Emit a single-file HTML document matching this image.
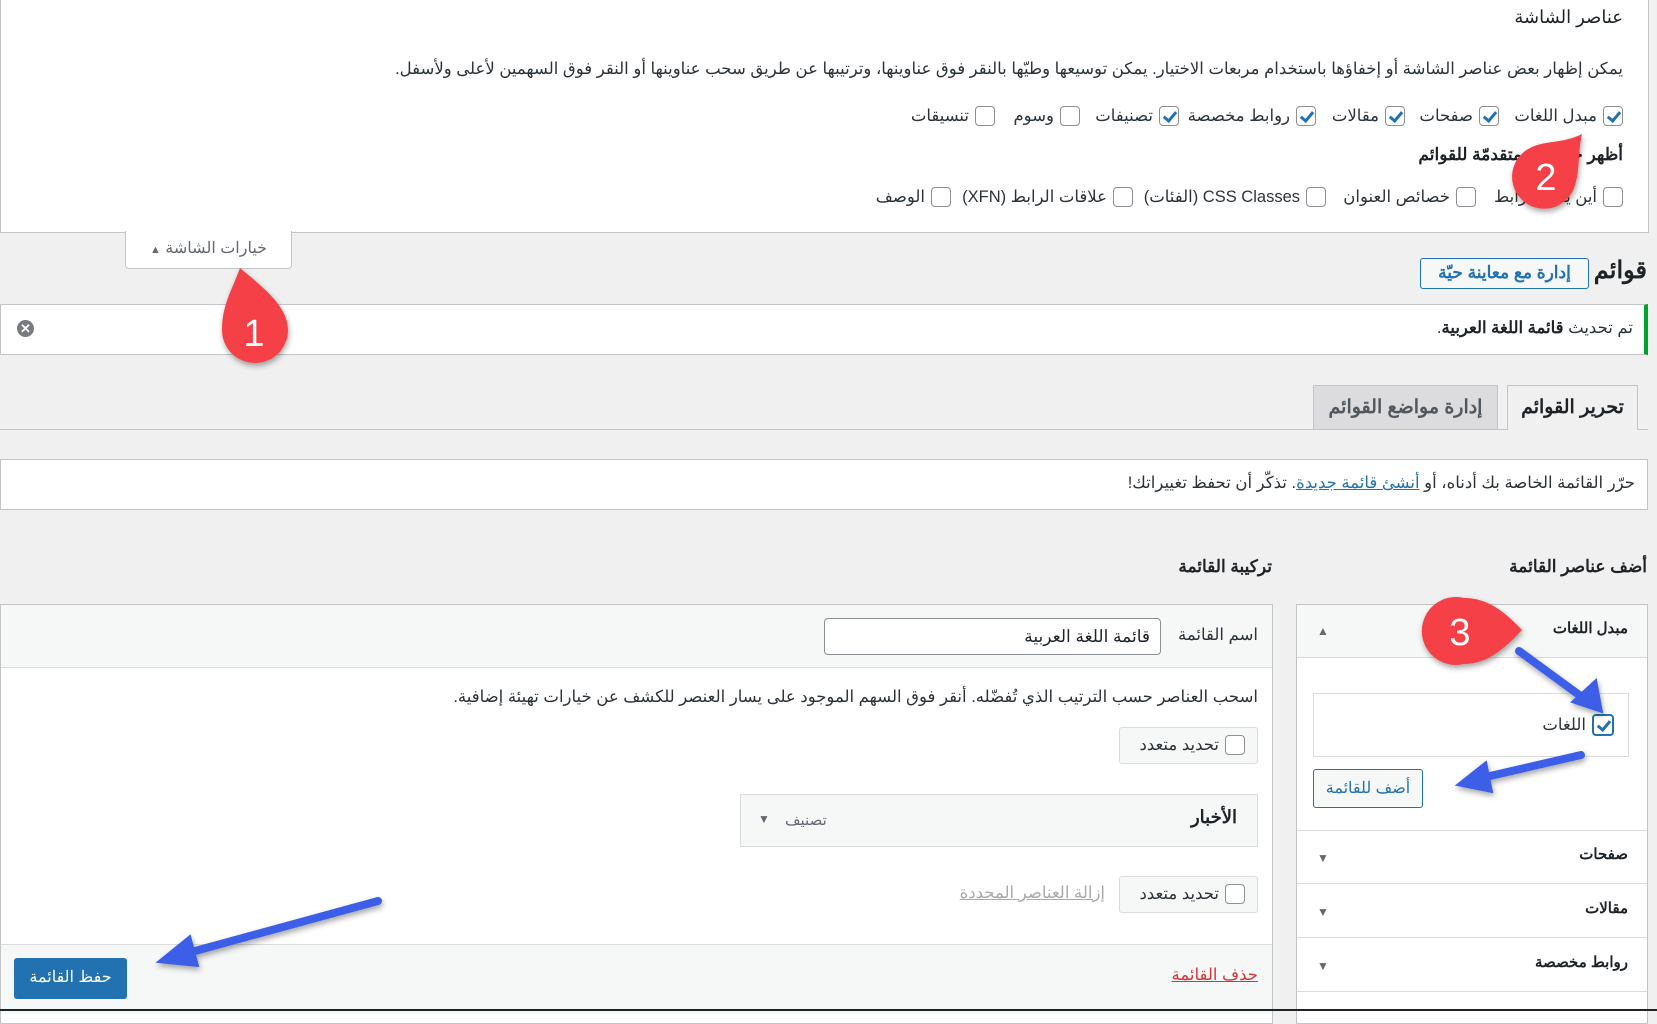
<!DOCTYPE html>
<html dir="rtl"><head><meta charset="utf-8"><style>
*{box-sizing:border-box;margin:0;padding:0}
body{width:1657px;height:1011px;overflow:hidden;background:#f0f0f1;font-family:"Liberation Sans","Noto Sans CJK SC",sans-serif;color:#1d2327;font-size:16.5px;position:relative}
.a{position:absolute;white-space:nowrap}
.cb{display:inline-block;width:20px;height:20px;border:1px solid #8c8f94;border-radius:4px;background:#fff;vertical-align:middle;position:relative}
.cb.on::after{content:"";position:absolute;left:6px;top:2px;width:5px;height:10px;border:solid #2271b1;border-width:0 3px 3px 0;transform:rotate(40deg)}
.it{position:absolute;display:flex;align-items:center;gap:6px;font-size:16.5px;color:#2c3338;white-space:nowrap}
.box{position:absolute;background:#fff;border:1px solid #c3c4c7}
b{font-weight:bold}
</style></head><body>
<div class="box" style="left:0;top:-1px;width:1649px;height:234px;border-top:none"></div>
<div class="a" style="right:34px;top:7px;font-size:18px;color:#1d2327">عناصر الشاشة</div>
<div class="a" style="right:34px;top:59px;font-size:16.5px;color:#2c3338">يمكن إظهار بعض عناصر الشاشة أو إخفاؤها باستخدام مربعات الاختيار. يمكن توسيعها وطيّها بالنقر فوق عناوينها، وترتيبها عن طريق سحب عناوينها أو النقر فوق السهمين لأعلى ولأسفل.</div>
<div class="it" style="right:34px;top:106px"><span class="cb on"></span>مبدل اللغات</div>
<div class="it" style="right:158px;top:106px"><span class="cb on"></span>صفحات</div>
<div class="it" style="right:252px;top:106px"><span class="cb on"></span>مقالات</div>
<div class="it" style="right:341px;top:106px"><span class="cb on"></span>روابط مخصصة</div>
<div class="it" style="right:478px;top:106px"><span class="cb on"></span>تصنيفات</div>
<div class="it" style="right:577px;top:106px"><span class="cb"></span>وسوم</div>
<div class="it" style="right:662px;top:106px"><span class="cb"></span>تنسيقات</div>
<div class="a" style="right:34px;top:145px;font-size:17px;font-weight:bold">أظهر خصائص متقدمّة للقوائم</div>
<div class="it" style="right:34px;top:187px"><span class="cb"></span>أين يفتح الرابط</div>
<div class="it" style="right:181px;top:187px"><span class="cb"></span>خصائص العنوان</div>
<div class="it" style="right:331px;top:187px"><span class="cb"></span>CSS Classes (الفئات)</div>
<div class="it" style="right:524px;top:187px"><span class="cb"></span>علاقات الرابط (XFN)</div>
<div class="it" style="right:706px;top:187px"><span class="cb"></span>الوصف</div>
<div class="a" style="left:125px;top:231px;width:167px;height:38px;background:#fff;border:1px solid #c3c4c7;border-top:none;border-radius:0 0 4px 4px;font-size:16px;color:#646970;text-align:center;line-height:36px">خيارات الشاشة <span style="font-size:11px">▲</span></div>
<div class="a" style="right:10px;top:256px;font-size:24px;font-weight:bold">قوائم</div>
<div class="a" style="left:1420px;top:258px;width:169px;height:31px;border:1px solid #2271b1;border-radius:3px;background:#f6f7f7;color:#2271b1;font-size:17px;font-weight:bold;text-align:center;line-height:28px">إدارة مع معاينة حيّة</div>
<div class="box" style="left:0;top:304px;width:1648px;height:51px;border-right:4px solid #00a32a"></div>
<div class="a" style="right:24px;top:318px;font-size:16.5px;color:#2c3338">تم تحديث <b style="color:#1d2327">قائمة اللغة العربية</b>.</div>
<div class="a" style="left:17px;top:320px;width:17px;height:17px;border-radius:50%;background:#787c82;color:#fff;font-size:13px;line-height:17px;text-align:center;font-weight:bold">✕</div>
<div class="a" style="left:0;top:429px;width:1648px;height:1px;background:#c3c4c7"></div>
<div class="a" style="left:1507px;top:385px;width:131px;height:45px;background:#f0f0f1;border:1px solid #c3c4c7;border-bottom:none;font-size:19px;font-weight:bold;text-align:center;line-height:44px">تحرير القوائم</div>
<div class="a" style="left:1313px;top:385px;width:185px;height:44px;background:#dcdcde;border:1px solid #c3c4c7;border-bottom:none;font-size:19px;font-weight:bold;color:#50575e;text-align:center;line-height:44px">إدارة مواضع القوائم</div>
<div class="box" style="left:0;top:459px;width:1648px;height:51px"></div>
<div class="a" style="right:22px;top:473px;font-size:16.5px;color:#2c3338">حرّر القائمة الخاصة بك أدناه، أو <span style="color:#2271b1;text-decoration:underline">أنشئ قائمة جديدة</span>. تذكّر أن تحفظ تغييراتك!</div>
<div class="a" style="right:10px;top:557px;font-size:17px;font-weight:bold">أضف عناصر القائمة</div>
<div class="a" style="right:385px;top:557px;font-size:17px;font-weight:bold">تركيبة القائمة</div>
<div class="box" style="left:0;top:604px;width:1273px;height:420px"></div>
<div class="a" style="left:1px;top:605px;width:1271px;height:63px;background:#f6f7f7;border-bottom:1px solid #dcdcde"></div>
<div class="a" style="right:399px;top:625px;font-size:16.5px;color:#2c3338">اسم القائمة</div>
<div class="a" style="left:824px;top:618px;width:337px;height:37px;background:#fff;border:1px solid #8c8f94;border-radius:4px;font-size:17px;padding-right:10px;line-height:35px;color:#1d2327">قائمة اللغة العربية</div>
<div class="a" style="right:399px;top:687px;font-size:16.5px;color:#2c3338">اسحب العناصر حسب الترتيب الذي تُفضّله. أنقر فوق السهم الموجود على يسار العنصر للكشف عن خيارات تهيئة إضافية.</div>
<div class="a" style="left:1119px;top:727px;width:139px;height:37px;background:#f6f7f7;border:1px solid #dcdcde;border-radius:3px"></div>
<div class="it" style="right:412px;top:735px"><span class="cb"></span>تحديد متعدد</div>
<div class="a" style="left:740px;top:794px;width:518px;height:53px;background:#f6f7f7;border:1px solid #dcdcde"></div>
<div class="a" style="right:420px;top:807px;font-size:18px;font-weight:bold">الأخبار</div>
<div class="a" style="left:785px;top:811px;font-size:15px;color:#646970">تصنيف</div>
<div class="a" style="left:758px;top:812px;font-size:12px;color:#646970">▼</div>
<div class="a" style="left:1119px;top:876px;width:139px;height:37px;background:#f6f7f7;border:1px solid #dcdcde;border-radius:3px"></div>
<div class="it" style="right:412px;top:884px"><span class="cb"></span>تحديد متعدد</div>
<div class="a" style="right:552px;top:883px;font-size:16.5px;color:#a7aaad;text-decoration:underline">إزالة العناصر المحددة</div>
<div class="a" style="left:1px;top:944px;width:1271px;height:70px;background:#f6f7f7;border-top:1px solid #dcdcde"></div>
<div class="a" style="left:14px;top:958px;width:113px;height:41px;background:#2271b1;border-radius:3px;color:#fff;font-size:16px;text-align:center;line-height:40px">حفظ القائمة</div>
<div class="a" style="right:399px;top:965px;font-size:16.5px;color:#d63638;text-decoration:underline">حذف القائمة</div>
<div class="box" style="left:1296px;top:604px;width:352px;height:420px"></div>
<div class="a" style="left:1297px;top:605px;width:350px;height:53px;background:#f6f7f7;border-bottom:1px solid #dcdcde"></div>
<div class="a" style="right:29px;top:619px;font-size:15px;font-weight:bold">مبدل اللغات</div>
<div class="a" style="left:1317px;top:624px;font-size:12px;color:#646970">▲</div>
<div class="a" style="left:1313px;top:693px;width:316px;height:64px;border:1px solid #dcdcde;background:#fff"></div>
<div class="it" style="right:43px;top:714px"><span class="cb on" style="width:22px;height:22px;border:2px solid #2271b1"></span>اللغات</div>
<div class="a" style="left:1313px;top:769px;width:110px;height:39px;border:1px solid #2271b1;border-radius:3px;background:#f6f7f7;color:#2271b1;font-size:16px;text-align:center;line-height:37px">أضف للقائمة</div>
<div class="a" style="left:1297px;top:830px;width:350px;height:1px;background:#dcdcde"></div>
<div class="a" style="right:29px;top:845px;font-size:15px;font-weight:bold">صفحات</div>
<div class="a" style="left:1317px;top:851px;font-size:12px;color:#646970">▼</div>
<div class="a" style="left:1297px;top:883px;width:350px;height:1px;background:#dcdcde"></div>
<div class="a" style="right:29px;top:899px;font-size:15px;font-weight:bold">مقالات</div>
<div class="a" style="left:1317px;top:905px;font-size:12px;color:#646970">▼</div>
<div class="a" style="left:1297px;top:937px;width:350px;height:1px;background:#dcdcde"></div>
<div class="a" style="right:29px;top:953px;font-size:15px;font-weight:bold">روابط مخصصة</div>
<div class="a" style="left:1317px;top:959px;font-size:12px;color:#646970">▼</div>
<div class="a" style="left:1297px;top:991px;width:350px;height:1px;background:#dcdcde"></div>
<div class="a" style="left:0;top:1009px;width:1657px;height:2px;background:#1d2327"></div>
<svg class="a" style="left:0;top:0" width="1657" height="1011">
<defs><filter id="sh"><feDropShadow dx="1" dy="3" stdDeviation="3" flood-opacity="0.35"/></filter></defs>
<g filter="url(#sh)" fill="#f54146">
<path d="M240 268 C260 285 288 305 288 330 A33 33 0 1 1 222 330 C222 305 232 290 240 268Z"/>
<path d="M1582 134 C1562 144 1545 140 1530 148 A32 32 0 1 0 1575 185 C1580 170 1578 150 1582 134Z"/>
<path d="M1522 630 C1505 612 1488 598 1464 598 A34 34 0 1 0 1464 664 C1488 664 1505 648 1522 630Z"/>
</g>
<g fill="#fff" font-family="Liberation Sans" font-size="38" text-anchor="middle">
<text x="254" y="346">1</text><text x="1546" y="190">2</text><text x="1460" y="645">3</text>
</g>
<g stroke="#3d5ee8" stroke-width="8" stroke-linecap="round" fill="#3d5ee8" filter="url(#sh)">
<line x1="1519" y1="651" x2="1582" y2="697"/>
<path d="M1602 712 L1596 680 L1572 702Z" stroke-width="2"/>
<line x1="1581" y1="755" x2="1490" y2="776"/>
<path d="M1457 785 L1486 762 L1492 792Z" stroke-width="2"/>
<line x1="378" y1="901" x2="195" y2="951"/>
<path d="M158 962 L190 936 L198 966Z" stroke-width="2"/>
</g>
</svg>
</body></html>
